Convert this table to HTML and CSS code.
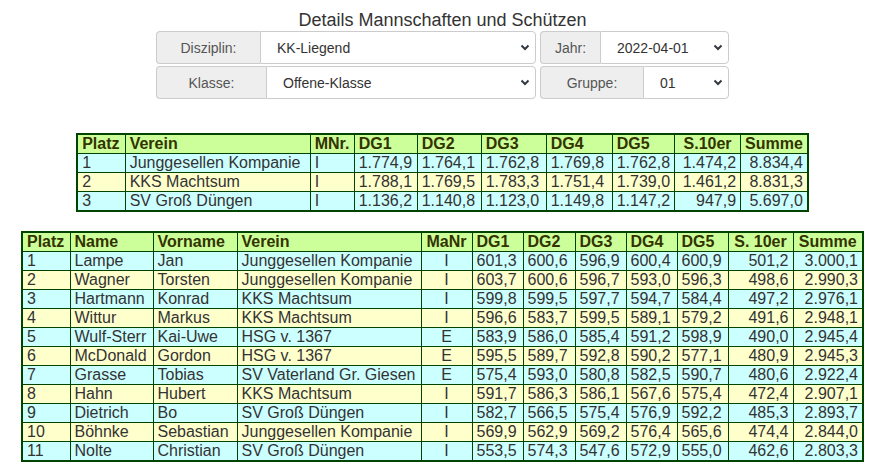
FILE: index.html
```html
<!DOCTYPE html>
<html lang="de">
<head>
<meta charset="utf-8">
<title>Details Mannschaften und Schützen</title>
<link rel="stylesheet" href="styles.css">
</head>
<body>
<div class="page">
  <h1 class="title">Details Mannschaften und Schützen</h1>
  <div class="filters">
    <div class="filter-row">
      <div class="group group-left">
        <span class="label label-disz">Disziplin:</span>
        <div class="select"><span>KK-Liegend</span><svg class="chev" width="10" height="7" viewBox="0 0 10 7"><path d="M1.5 1.5 L5 5 L8.5 1.5" fill="none" stroke="#343a40" stroke-width="2"/></svg></div>
      </div>
      <div class="group group-right">
        <span class="label label-jahr">Jahr:</span>
        <div class="select"><span>2022-04-01</span><svg class="chev" width="10" height="7" viewBox="0 0 10 7"><path d="M1.5 1.5 L5 5 L8.5 1.5" fill="none" stroke="#343a40" stroke-width="2"/></svg></div>
      </div>
    </div>
    <div class="filter-row">
      <div class="group group-left">
        <span class="label label-klasse">Klasse:</span>
        <div class="select"><span>Offene-Klasse</span><svg class="chev" width="10" height="7" viewBox="0 0 10 7"><path d="M1.5 1.5 L5 5 L8.5 1.5" fill="none" stroke="#343a40" stroke-width="2"/></svg></div>
      </div>
      <div class="group group-right">
        <span class="label label-gruppe">Gruppe:</span>
        <div class="select"><span>01</span><svg class="chev" width="10" height="7" viewBox="0 0 10 7"><path d="M1.5 1.5 L5 5 L8.5 1.5" fill="none" stroke="#343a40" stroke-width="2"/></svg></div>
      </div>
    </div>
  </div>

  <table class="tbl team">
    <colgroup>
      <col style="width:48px"><col style="width:185px"><col style="width:44px"><col style="width:63px"><col style="width:64px"><col style="width:65px"><col style="width:66px"><col style="width:61px"><col style="width:66px"><col style="width:67px">
    </colgroup>
    <thead>
      <tr><th>Platz</th><th>Verein</th><th>MNr.</th><th>DG1</th><th>DG2</th><th>DG3</th><th>DG4</th><th>DG5</th><th class="c">S.10er</th><th class="c">Summe</th></tr>
    </thead>
    <tbody>
      <tr class="odd"><td>1</td><td>Junggesellen Kompanie</td><td>I</td><td>1.774,9</td><td>1.764,1</td><td>1.762,8</td><td>1.769,8</td><td>1.762,8</td><td class="r">1.474,2</td><td class="r">8.834,4</td></tr>
      <tr class="even"><td>2</td><td>KKS Machtsum</td><td>I</td><td>1.788,1</td><td>1.769,5</td><td>1.783,3</td><td>1.751,4</td><td>1.739,0</td><td class="r">1.461,2</td><td class="r">8.831,3</td></tr>
      <tr class="odd"><td>3</td><td>SV Groß Düngen</td><td>I</td><td>1.136,2</td><td>1.140,8</td><td>1.123,0</td><td>1.149,8</td><td>1.147,2</td><td class="r">947,9</td><td class="r">5.697,0</td></tr>
    </tbody>
  </table>

  <table class="tbl players">
    <colgroup>
      <col style="width:48px"><col style="width:83px"><col style="width:84px"><col style="width:184px"><col style="width:51px"><col style="width:51px"><col style="width:52px"><col style="width:51px"><col style="width:51px"><col style="width:51px"><col style="width:65px"><col style="width:70px">
    </colgroup>
    <thead>
      <tr><th>Platz</th><th>Name</th><th>Vorname</th><th>Verein</th><th class="c">MaNr</th><th>DG1</th><th>DG2</th><th>DG3</th><th>DG4</th><th>DG5</th><th class="c">S. 10er</th><th class="c">Summe</th></tr>
    </thead>
    <tbody>
      <tr class="odd"><td>1</td><td>Lampe</td><td>Jan</td><td>Junggesellen Kompanie</td><td class="c">I</td><td>601,3</td><td>600,6</td><td>596,9</td><td>600,4</td><td>600,9</td><td class="r">501,2</td><td class="r">3.000,1</td></tr>
      <tr class="even"><td>2</td><td>Wagner</td><td>Torsten</td><td>Junggesellen Kompanie</td><td class="c">I</td><td>603,7</td><td>600,6</td><td>596,7</td><td>593,0</td><td>596,3</td><td class="r">498,6</td><td class="r">2.990,3</td></tr>
      <tr class="odd"><td>3</td><td>Hartmann</td><td>Konrad</td><td>KKS Machtsum</td><td class="c">I</td><td>599,8</td><td>599,5</td><td>597,7</td><td>594,7</td><td>584,4</td><td class="r">497,2</td><td class="r">2.976,1</td></tr>
      <tr class="even"><td>4</td><td>Wittur</td><td>Markus</td><td>KKS Machtsum</td><td class="c">I</td><td>596,6</td><td>583,7</td><td>599,5</td><td>589,1</td><td>579,2</td><td class="r">491,6</td><td class="r">2.948,1</td></tr>
      <tr class="odd"><td>5</td><td>Wulf-Sterr</td><td>Kai-Uwe</td><td>HSG v. 1367</td><td class="c">E</td><td>583,9</td><td>586,0</td><td>585,4</td><td>591,2</td><td>598,9</td><td class="r">490,0</td><td class="r">2.945,4</td></tr>
      <tr class="even"><td>6</td><td>McDonald</td><td>Gordon</td><td>HSG v. 1367</td><td class="c">E</td><td>595,5</td><td>589,7</td><td>592,8</td><td>590,2</td><td>577,1</td><td class="r">480,9</td><td class="r">2.945,3</td></tr>
      <tr class="odd"><td>7</td><td>Grasse</td><td>Tobias</td><td>SV Vaterland Gr. Giesen</td><td class="c">E</td><td>575,4</td><td>593,0</td><td>580,8</td><td>582,5</td><td>590,7</td><td class="r">480,6</td><td class="r">2.922,4</td></tr>
      <tr class="even"><td>8</td><td>Hahn</td><td>Hubert</td><td>KKS Machtsum</td><td class="c">I</td><td>591,7</td><td>586,3</td><td>586,1</td><td>567,6</td><td>575,4</td><td class="r">472,4</td><td class="r">2.907,1</td></tr>
      <tr class="odd"><td>9</td><td>Dietrich</td><td>Bo</td><td>SV Groß Düngen</td><td class="c">I</td><td>582,7</td><td>566,5</td><td>575,4</td><td>576,9</td><td>592,2</td><td class="r">485,3</td><td class="r">2.893,7</td></tr>
      <tr class="even"><td>10</td><td>Böhnke</td><td>Sebastian</td><td>Junggesellen Kompanie</td><td class="c">I</td><td>569,9</td><td>562,9</td><td>569,2</td><td>576,4</td><td>565,6</td><td class="r">474,4</td><td class="r">2.844,0</td></tr>
      <tr class="odd"><td>11</td><td>Nolte</td><td>Christian</td><td>SV Groß Düngen</td><td class="c">I</td><td>553,5</td><td>574,3</td><td>547,6</td><td>572,9</td><td>555,0</td><td class="r">462,6</td><td class="r">2.803,3</td></tr>
    </tbody>
  </table>
</div>
</body>
</html>
```

FILE: styles.css
```css
html, body {
  margin: 0;
  padding: 0;
  background: #fff;
}
body {
  font-family: "Liberation Sans", Arial, sans-serif;
  color: #333;
}
.page {
  width: 870px;
  padding-left: 15px;
  box-sizing: border-box;
  display: flex;
  flex-direction: column;
  align-items: center;
}
.title {
  margin: 10px 0 1px;
  font-size: 18px;
  line-height: 20px;
  font-weight: normal;
  color: #333;
}
.filters {
  display: flex;
  flex-direction: column;
  gap: 2px;
}
.filter-row {
  display: flex;
  gap: 4px;
}
.group {
  display: flex;
  height: 33px;
  font-size: 14px;
  color: #555;
}
.group-left { width: 380px; }
.group-right { width: 189px; }
.label {
  display: flex;
  align-items: center;
  justify-content: center;
  background: #eee;
  border: 1px solid #ccc;
  border-right: 0;
  border-radius: 4px 0 0 4px;
  box-sizing: border-box;
  flex: none;
}
.label-disz { width: 104px; }
.label-klasse { width: 110px; }
.label-jahr { width: 60px; }
.label-gruppe { width: 103px; }
.select {
  flex: 1;
  display: flex;
  align-items: center;
  justify-content: space-between;
  border: 1px solid #ccc;
  border-radius: 0 4px 4px 0;
  box-sizing: border-box;
  padding: 0 5px 0 16px;
  background: #fff;
  color: #333;
}
.chev { flex: none; }

.tbl {
  border-collapse: collapse;
  table-layout: fixed;
  font-size: 16px;
  line-height: 18px;
  border: 2px solid #004400;
  color: #333;
}
.team { margin-top: 34px; }
.players { margin-top: 19px; }
.tbl th, .tbl td {
  border: 1px solid #004400;
  padding: 0 4px;
  text-align: left;
  white-space: nowrap;
  overflow: hidden;
}
.tbl th {
  background: #ccff99;
  font-weight: bold;
  color: #333300;
}
.tbl tr.odd td { background: #ccffff; }
.tbl tr.even td { background: #ffffcc; }
.tbl .c { text-align: center; }
.tbl .r { text-align: right; }
```
